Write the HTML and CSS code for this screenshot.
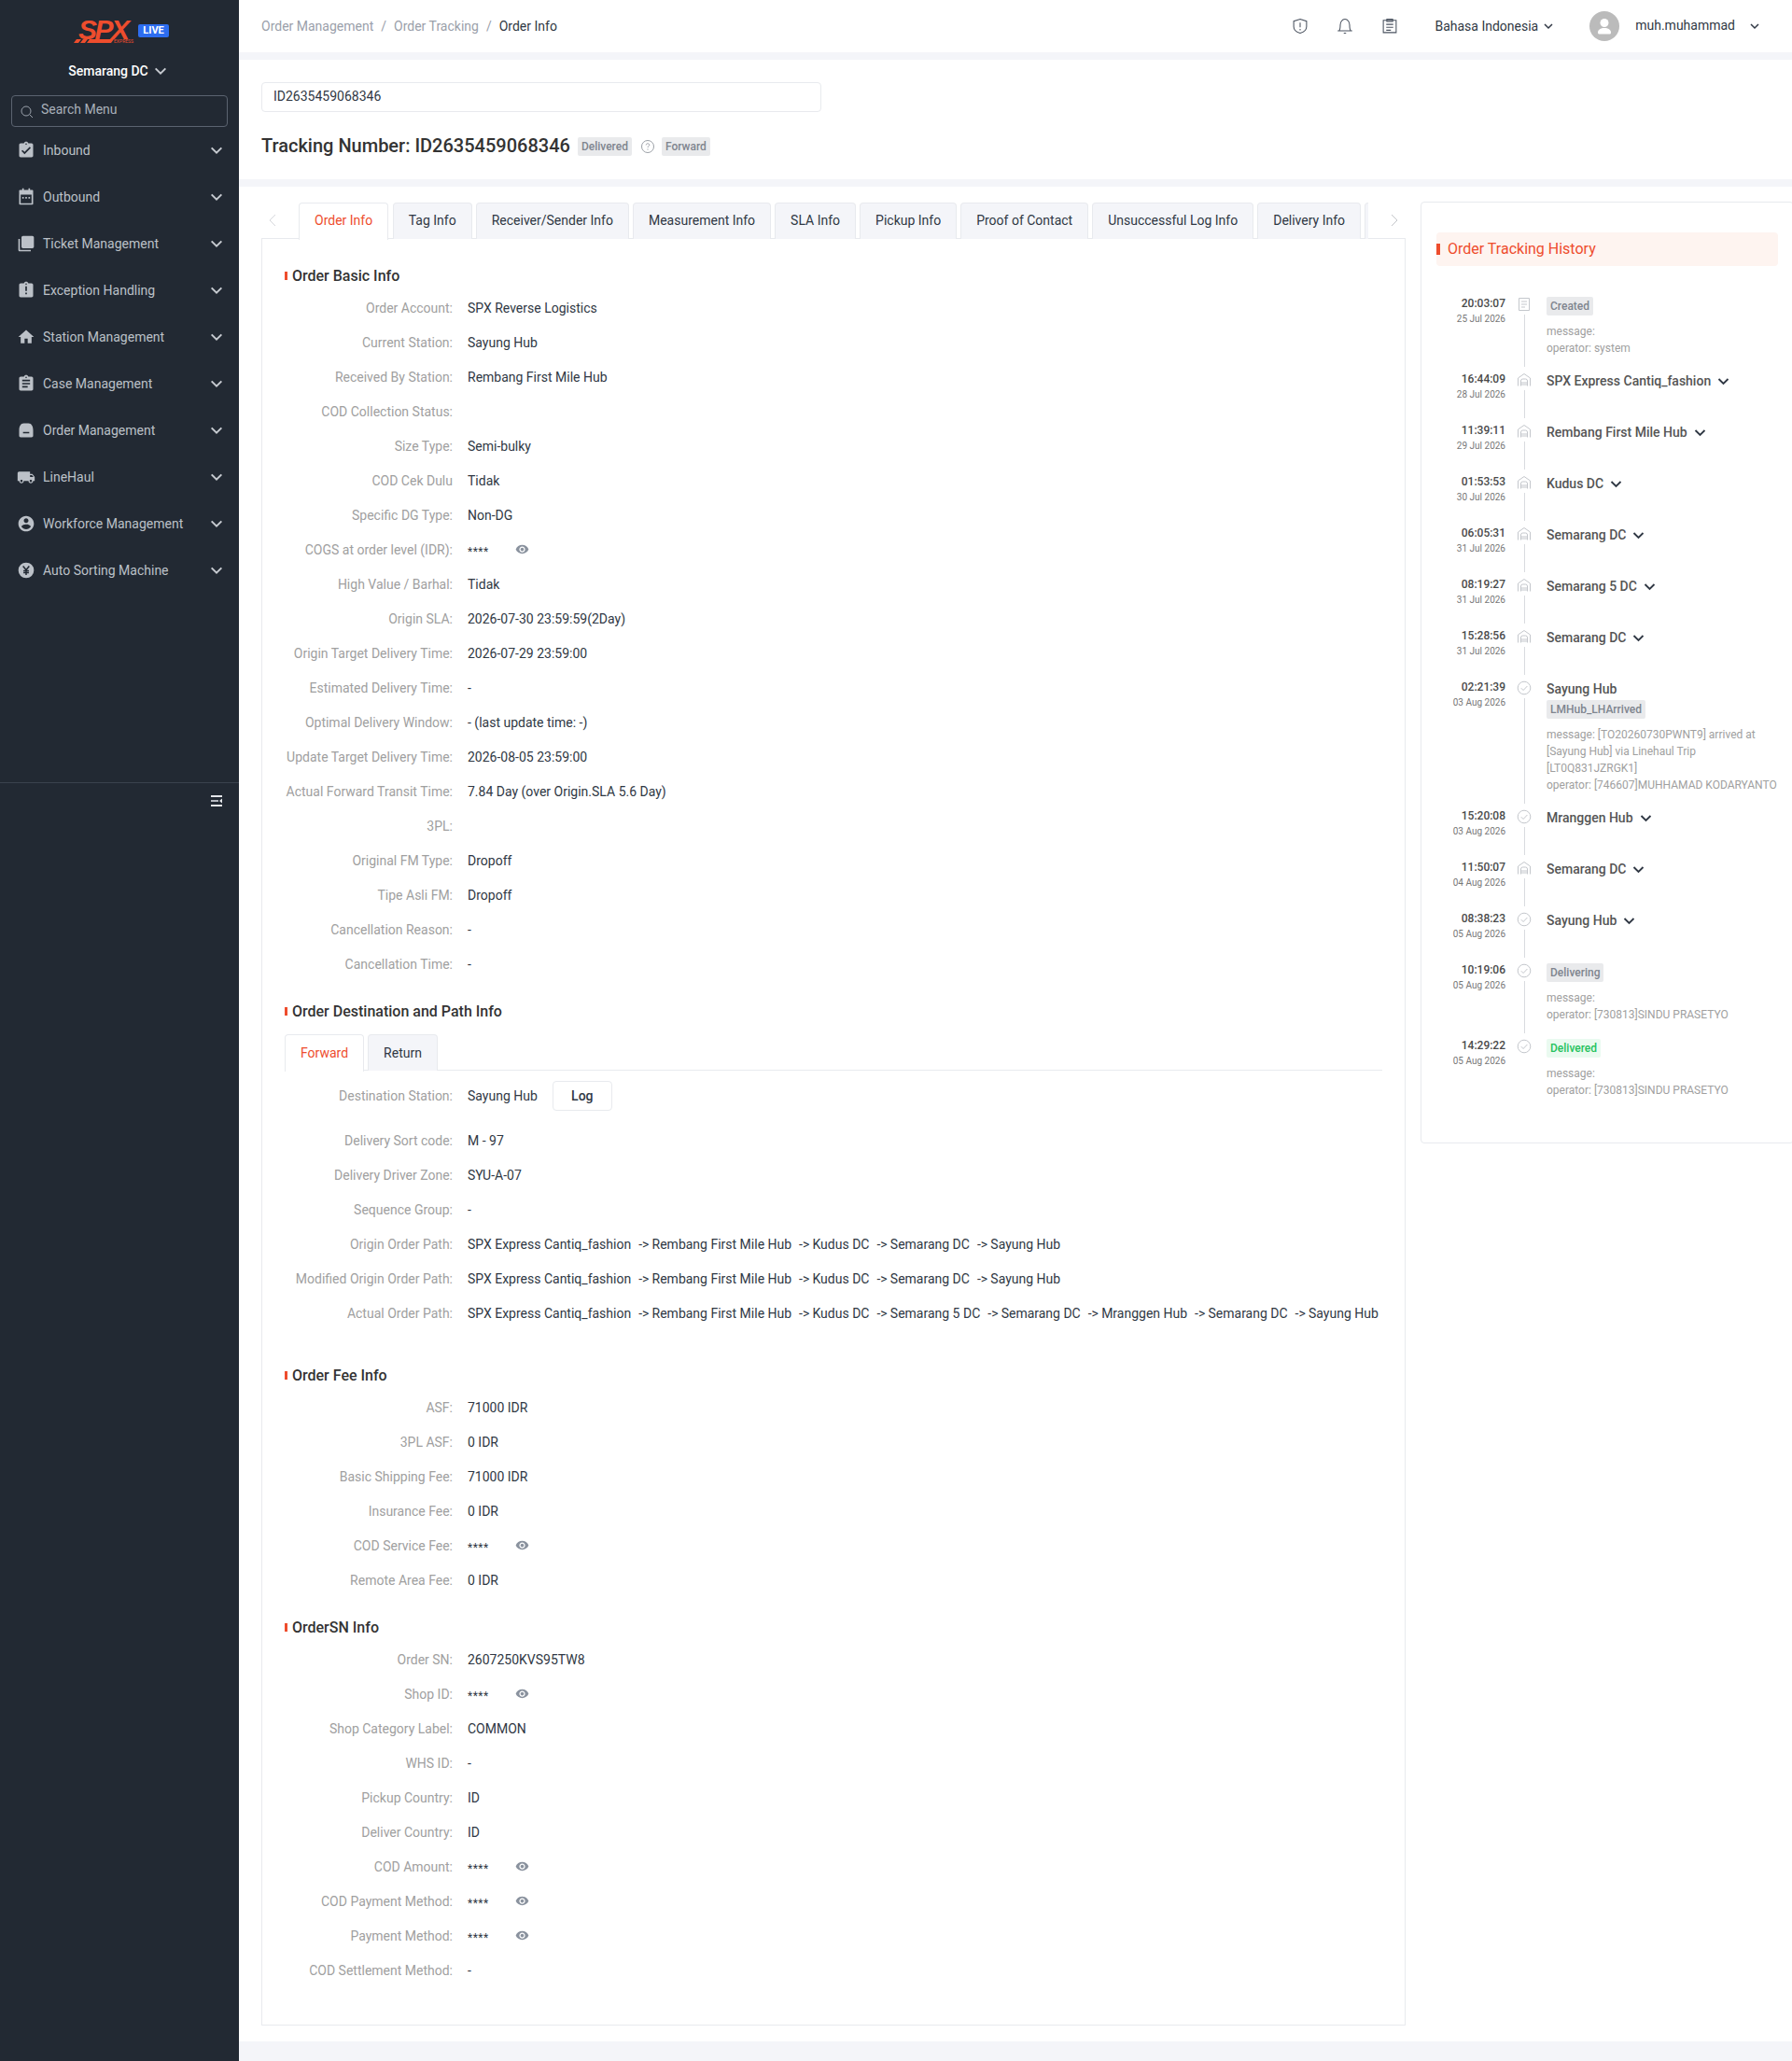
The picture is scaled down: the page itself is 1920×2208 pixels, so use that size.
FILE: index.html
```html
<!DOCTYPE html>
<html lang="en">
<head>
    <meta charset="UTF-8">
    <title>Order Info</title>
    <link rel="stylesheet" href="styles.css">
</head>
<body>

    <!-- shared icons -->
    <svg class="icon-defs" width="0" height="0">
        <symbol id="i-eye" viewBox="0 0 24 24"><path d="M12 4.500C7 4.500 2.730 7.610 1 12c1.730 4.390 6 7.500 11 7.500s9.270-3.110 11-7.500c-1.730-4.390-6-7.500-11-7.500zM12 17c-2.760 0-5-2.240-5-5s2.240-5 5-5 5 2.240 5 5-2.240 5-5 5zm0-8c-1.660 0-3 1.340-3 3s1.340 3 3 3 3-1.340 3-3-1.340-3-3-3z"/></symbol>
        <symbol id="i-down" viewBox="0 0 12 12"><path d="M2 4l4 4 4-4" fill="none" stroke="currentColor" stroke-width="1.500"/></symbol>
        <symbol id="i-doc" viewBox="0 0 16 16"><path d="M2.500 1.500h11v13h-11zM5 5h6M5 8h6M5 11h4" fill="none" stroke="currentColor"/></symbol>
        <symbol id="i-station" viewBox="0 0 16 16"><path d="M1.500 14.500V6L8 1.500 14.500 6v8.500" fill="none" stroke="currentColor"/><path d="M4.500 14.500V9q0-2 2-2h3q2 0 2 2v5.500M4.500 11h7M4.500 13h7" fill="none" stroke="currentColor"/></symbol>
        <symbol id="i-check" viewBox="0 0 16 16"><circle cx="8" cy="8" r="6.800" fill="none" stroke="currentColor"/><path d="M4.800 8.200l2.300 2.300 4.300-4.500" fill="none" stroke="currentColor"/></symbol>
    </svg>

    <div class="layout">

        <aside class="sidebar">
            <div class="brand">
                <svg class="spx-logo" width="66" height="37" viewBox="0 -6 66 37">
                    <text class="spx-word" x="5" y="23">SPX</text>
                    <path d="M3 23h5l-3 4H0zM10 23h5l-3 4H7zM17 23h26l-3 4H14z" fill="#ee4d2d"/>
                    <text class="spx-sub" x="43" y="27">EXPRESS</text>
                </svg>
                <span class="live-badge">LIVE</span>
            </div>
            <div class="station-switch">Semarang DC <svg width="16" height="16"><use href="#i-down"/></svg></div>
            <div class="menu-search">
                <svg width="14" height="14" viewBox="0 0 14 14"><circle cx="6" cy="6" r="5" fill="none" stroke="#9aa1ab"/><path d="M10 10l3 3" stroke="#9aa1ab"/></svg>
                <span>Search Menu</span>
            </div>
            <ul class="menu">
                <li class="menu-item">
                    <svg class="menu-icon" viewBox="0 0 24 24"><path d="M19 3h-4.180C14.400 1.840 13.300 1 12 1c-1.300 0-2.400.84-2.820 2H5c-1.100 0-2 .9-2 2v14c0 1.100.9 2 2 2h14c1.100 0 2-.9 2-2V5c0-1.100-.9-2-2-2zm-7 0c.55 0 1 .45 1 1s-.45 1-1 1-1-.45-1-1 .45-1 1-1zm-2 14l-4-4 1.410-1.410L10 14.170l6.590-6.590L18 9l-8 8z"/></svg>
                    <span>Inbound</span><svg class="menu-arrow"><use href="#i-down"/></svg>
                </li>
                <li class="menu-item">
                    <svg class="menu-icon" viewBox="0 0 24 24"><path fill-rule="evenodd" d="M7 1h2v2h6V1h2v2h3c.6 0 1 .4 1 1v17c0 .6-.4 1-1 1H4c-.6 0-1-.4-1-1V4c0-.6.4-1 1-1h3V1zM5 9v11h14V9H5zm2 3h2v2H7v-2zm4 0h2v2h-2v-2zm4 0h2v2h-2v-2z"/></svg>
                    <span>Outbound</span><svg class="menu-arrow"><use href="#i-down"/></svg>
                </li>
                <li class="menu-item">
                    <svg class="menu-icon" viewBox="0 0 24 24"><path d="M4 6H2v14c0 1.100.9 2 2 2h14v-2H4V6zm16-4H8c-1.100 0-2 .9-2 2v12c0 1.100.9 2 2 2h12c1.100 0 2-.9 2-2V4c0-1.100-.9-2-2-2z"/></svg>
                    <span>Ticket Management</span><svg class="menu-arrow"><use href="#i-down"/></svg>
                </li>
                <li class="menu-item">
                    <svg class="menu-icon" viewBox="0 0 24 24"><path d="M19 3h-4.180C14.400 1.840 13.300 1 12 1c-1.300 0-2.400.84-2.820 2H5c-1.100 0-2 .9-2 2v14c0 1.100.9 2 2 2h14c1.100 0 2-.9 2-2V5c0-1.100-.9-2-2-2zm-7 0c.55 0 1 .45 1 1s-.45 1-1 1-1-.45-1-1 .45-1 1-1zm1 14h-2v-2h2v2zm0-4h-2V7h2v6z"/></svg>
                    <span>Exception Handling</span><svg class="menu-arrow"><use href="#i-down"/></svg>
                </li>
                <li class="menu-item">
                    <svg class="menu-icon" viewBox="0 0 24 24"><path d="M10 20v-6h4v6h5v-8h3L12 3 2 12h3v8z"/></svg>
                    <span>Station Management</span><svg class="menu-arrow"><use href="#i-down"/></svg>
                </li>
                <li class="menu-item">
                    <svg class="menu-icon" viewBox="0 0 24 24"><path d="M19 3h-4.180C14.400 1.840 13.300 1 12 1c-1.300 0-2.400.84-2.820 2H5c-1.100 0-2 .9-2 2v14c0 1.100.9 2 2 2h14c1.100 0 2-.9 2-2V5c0-1.100-.9-2-2-2zm-7 0c.55 0 1 .45 1 1s-.45 1-1 1-1-.45-1-1 .45-1 1-1zm2 14H7v-2h7v2zm3-4H7v-2h10v2zm0-4H7V7h10v2z"/></svg>
                    <span>Case Management</span><svg class="menu-arrow"><use href="#i-down"/></svg>
                </li>
                <li class="menu-item">
                    <svg class="menu-icon" viewBox="0 0 24 24"><path fill-rule="evenodd" d="M3 12C3 7 5 3 9 3h6c4 0 6 4 6 9v7c0 1.100-.9 2-2 2H5c-1.100 0-2-.9-2-2v-7zm5 2v2h8v-2H8z"/></svg>
                    <span>Order Management</span><svg class="menu-arrow"><use href="#i-down"/></svg>
                </li>
                <li class="menu-item">
                    <svg class="menu-icon" viewBox="0 0 24 24"><path d="M20 8h-3V5H3c-1.100 0-2 .9-2 2v10h2c0 1.660 1.340 3 3 3s3-1.340 3-3h6c0 1.660 1.340 3 3 3s3-1.340 3-3h2v-5l-3-4zM6 18.500c-.83 0-1.500-.67-1.500-1.500s.67-1.500 1.500-1.500 1.500.67 1.500 1.500-.67 1.500-1.500 1.500zm13.500-9l1.960 2.500H17V9.500h2.500zm-1.500 9c-.83 0-1.500-.67-1.500-1.500s.67-1.500 1.500-1.500 1.500.67 1.500 1.500-.67 1.500-1.500 1.500z"/></svg>
                    <span>LineHaul</span><svg class="menu-arrow"><use href="#i-down"/></svg>
                </li>
                <li class="menu-item">
                    <svg class="menu-icon" viewBox="0 0 24 24"><path d="M12 2C6.480 2 2 6.480 2 12s4.480 10 10 10 10-4.480 10-10S17.520 2 12 2zm0 3c1.660 0 3 1.340 3 3s-1.340 3-3 3-3-1.340-3-3 1.340-3 3-3zm0 14.200c-2.500 0-4.710-1.280-6-3.220.03-1.990 4-3.080 6-3.080 1.990 0 5.970 1.090 6 3.080-1.290 1.940-3.500 3.220-6 3.220z"/></svg>
                    <span>Workforce Management</span><svg class="menu-arrow"><use href="#i-down"/></svg>
                </li>
                <li class="menu-item">
                    <svg class="menu-icon" viewBox="0 0 24 24"><circle cx="12" cy="12" r="10"/><path d="M8 6.500l4 5 4-5M12 11.500V18M8.500 12.500h7M8.500 15h7" fill="none" stroke="#222933" stroke-width="1.800"/></svg>
                    <span>Auto Sorting Machine</span><svg class="menu-arrow"><use href="#i-down"/></svg>
                </li>
            </ul>
            <div class="collapse-bar">
                <svg width="12" height="12" viewBox="0 0 12 12"><path d="M0 0h12v2H0zM0 10h12v2H0z" fill="#e4e6ea"/><path d="M0 5h8v2H0z" fill="#b4b8bf"/><path d="M12 3.500v5L9 6z" fill="#e4e6ea"/></svg>
            </div>
        </aside>

        <div class="page">

            <header class="topbar">
                <nav class="crumbs">
                    <span>Order Management</span><i>/</i><span>Order Tracking</span><i>/</i><b>Order Info</b>
                </nav>
                <div class="top-tools">
                    <svg class="tool" viewBox="0 0 16 16"><path d="M8 2l5.500 1.800v4.500c0 2.800-2.500 4.700-5.500 5.700-3-1-5.500-2.900-5.500-5.700V3.800zM8 5v4M8 10.300v1.200" fill="none" stroke="#4b5360" stroke-width=".85"/></svg>
                    <svg class="tool" viewBox="0 0 16 16"><path d="M3 12c1-1.200 1-2.500 1-5 0-2.500 1.600-5 4-5s4 2.500 4 5c0 2.500 0 3.800 1 5zM1.800 12h12.400M7 14h2" fill="none" stroke="#4b5360" stroke-width=".85"/></svg>
                    <svg class="tool" viewBox="0 0 16 16"><path d="M2.500 3h11v10.500h-11zM5.500 2h5v2h-5zM5 6.500h6M5 9h6M5 11.500h4" fill="none" stroke="#4b5360" stroke-width=".85"/></svg>
                    <span class="lang">Bahasa Indonesia <svg width="12" height="12"><use href="#i-down"/></svg></span>
                    <span class="avatar">
                        <svg width="32" height="32" viewBox="0 0 32 32"><circle cx="16" cy="16" r="16" fill="#bbb"/><circle cx="16" cy="12.500" r="4.500" fill="#fff"/><path d="M9 23c0-3.500 3-5 7-5s7 1.500 7 5c0 .8-.5 1.500-1.500 1.500h-11C9.500 24.500 9 23.800 9 23z" fill="#fff"/></svg>
                    </span>
                    <span class="user">muh.muhammad</span>
                    <svg class="user-arrow" width="12" height="12"><use href="#i-down"/></svg>
                </div>
            </header>

            <section class="search-head">
                <div class="track-input">ID2635459068346</div>
                <div class="track-title">
                    <h1>Tracking Number: ID2635459068346</h1>
                    <span class="tag">Delivered</span>
                    <svg class="help" width="16" height="16" viewBox="0 0 16 16"><circle cx="8" cy="8" r="6.500" fill="none" stroke="#9b9fa6"/><path d="M6.200 6.400c0-1 .8-1.600 1.800-1.600s1.800.6 1.800 1.500c0 1.300-1.800 1.300-1.800 2.700M8 10.400v1.200" fill="none" stroke="#9b9fa6"/></svg>
                    <span class="tag">Forward</span>
                </div>
            </section>

            <div class="content">

                <main class="detail">
                    <div class="tabs-bar">
                        <svg class="tab-arrow" width="8" height="14" viewBox="0 0 8 14"><path d="M7 1L1 7l6 6" fill="none" stroke="#d6d8dc"/></svg>
                        <div class="tabs">
                            <span class="tab active">Order Info</span>
                            <span class="tab">Tag Info</span>
                            <span class="tab">Receiver/Sender Info</span>
                            <span class="tab">Measurement Info</span>
                            <span class="tab">SLA Info</span>
                            <span class="tab">Pickup Info</span>
                            <span class="tab">Proof of Contact</span>
                            <span class="tab">Unsuccessful Log Info</span>
                            <span class="tab">Delivery Info</span>
                            <span class="tab tab-clipped"></span>
                        </div>
                        <svg class="tab-arrow" width="8" height="14" viewBox="0 0 8 14"><path d="M1 1l6 6-6 6" fill="none" stroke="#c4c6ca"/></svg>
                    </div>

                    <div class="card">
                        <h3 class="sec-title">Order Basic Info</h3>
                        <div class="row"><label>Order Account:</label><div>SPX Reverse Logistics</div></div>
                        <div class="row"><label>Current Station:</label><div>Sayung Hub</div></div>
                        <div class="row"><label>Received By Station:</label><div>Rembang First Mile Hub</div></div>
                        <div class="row"><label>COD Collection Status:</label><div></div></div>
                        <div class="row"><label>Size Type:</label><div>Semi-bulky</div></div>
                        <div class="row"><label>COD Cek Dulu</label><div>Tidak</div></div>
                        <div class="row"><label>Specific DG Type:</label><div>Non-DG</div></div>
                        <div class="row"><label>COGS at order level (IDR):</label><div class="masked"><span>****</span><svg><use href="#i-eye"/></svg></div></div>
                        <div class="row"><label>High Value / Barhal:</label><div>Tidak</div></div>
                        <div class="row"><label>Origin SLA:</label><div>2026-07-30 23:59:59(2Day)</div></div>
                        <div class="row"><label>Origin Target Delivery Time:</label><div>2026-07-29 23:59:00</div></div>
                        <div class="row"><label>Estimated Delivery Time:</label><div>-</div></div>
                        <div class="row"><label>Optimal Delivery Window:</label><div>- (last update time: -)</div></div>
                        <div class="row"><label>Update Target Delivery Time:</label><div>2026-08-05 23:59:00</div></div>
                        <div class="row"><label>Actual Forward Transit Time:</label><div>7.84 Day (over Origin.SLA 5.6 Day)</div></div>
                        <div class="row"><label>3PL:</label><div></div></div>
                        <div class="row"><label>Original FM Type:</label><div>Dropoff</div></div>
                        <div class="row"><label>Tipe Asli FM:</label><div>Dropoff</div></div>
                        <div class="row"><label>Cancellation Reason:</label><div>-</div></div>
                        <div class="row"><label>Cancellation Time:</label><div>-</div></div>

                        <h3 class="sec-title sec-next">Order Destination and Path Info</h3>
                        <div class="sub-tabs">
                            <span class="tab active">Forward</span>
                            <span class="tab">Return</span>
                        </div>
                        <div class="row row-log"><label>Destination Station:</label><div class="with-log">Sayung Hub <button type="button">Log</button></div></div>
                        <div class="row"><label>Delivery Sort code:</label><div>M - 97</div></div>
                        <div class="row"><label>Delivery Driver Zone:</label><div>SYU-A-07</div></div>
                        <div class="row"><label>Sequence Group:</label><div>-</div></div>
                        <div class="row"><label>Origin Order Path:</label><div class="path">SPX Express Cantiq_fashion<i>-&gt;</i>Rembang First Mile Hub<i>-&gt;</i>Kudus DC<i>-&gt;</i>Semarang DC<i>-&gt;</i>Sayung Hub</div></div>
                        <div class="row"><label>Modified Origin Order Path:</label><div class="path">SPX Express Cantiq_fashion<i>-&gt;</i>Rembang First Mile Hub<i>-&gt;</i>Kudus DC<i>-&gt;</i>Semarang DC<i>-&gt;</i>Sayung Hub</div></div>
                        <div class="row"><label>Actual Order Path:</label><div class="path">SPX Express Cantiq_fashion<i>-&gt;</i>Rembang First Mile Hub<i>-&gt;</i>Kudus DC<i>-&gt;</i>Semarang 5 DC<i>-&gt;</i>Semarang DC<i>-&gt;</i>Mranggen Hub<i>-&gt;</i>Semarang DC<i>-&gt;</i>Sayung Hub</div></div>

                        <h3 class="sec-title sec-fee">Order Fee Info</h3>
                        <div class="row"><label>ASF:</label><div>71000 IDR</div></div>
                        <div class="row"><label>3PL ASF:</label><div>0 IDR</div></div>
                        <div class="row"><label>Basic Shipping Fee:</label><div>71000 IDR</div></div>
                        <div class="row"><label>Insurance Fee:</label><div>0 IDR</div></div>
                        <div class="row"><label>COD Service Fee:</label><div class="masked"><span>****</span><svg><use href="#i-eye"/></svg></div></div>
                        <div class="row"><label>Remote Area Fee:</label><div>0 IDR</div></div>

                        <h3 class="sec-title sec-next">OrderSN Info</h3>
                        <div class="row"><label>Order SN:</label><div>2607250KVS95TW8</div></div>
                        <div class="row"><label>Shop ID:</label><div class="masked"><span>****</span><svg><use href="#i-eye"/></svg></div></div>
                        <div class="row"><label>Shop Category Label:</label><div>COMMON</div></div>
                        <div class="row"><label>WHS ID:</label><div>-</div></div>
                        <div class="row"><label>Pickup Country:</label><div>ID</div></div>
                        <div class="row"><label>Deliver Country:</label><div>ID</div></div>
                        <div class="row"><label>COD Amount:</label><div class="masked"><span>****</span><svg><use href="#i-eye"/></svg></div></div>
                        <div class="row"><label>COD Payment Method:</label><div class="masked"><span>****</span><svg><use href="#i-eye"/></svg></div></div>
                        <div class="row"><label>Payment Method:</label><div class="masked"><span>****</span><svg><use href="#i-eye"/></svg></div></div>
                        <div class="row"><label>COD Settlement Method:</label><div>-</div></div>
                    </div>
                </main>

                <aside class="history">
                    <div class="history-title">Order Tracking History</div>
                    <div class="timeline">

                        <div class="step">
                            <div class="step-time"><b>20:03:07</b><span>25 Jul 2026</span></div>
                            <div class="step-node"><svg><use href="#i-doc"/></svg></div>
                            <div class="step-body">
                                <span class="tag tag-top">Created</span>
                                <p class="note">message:<br>operator: system</p>
                            </div>
                        </div>

                        <div class="step">
                            <div class="step-time"><b>16:44:09</b><span>28 Jul 2026</span></div>
                            <div class="step-node"><svg><use href="#i-station"/></svg></div>
                            <div class="step-body"><div class="step-name">SPX Express Cantiq_fashion <svg><use href="#i-down"/></svg></div></div>
                        </div>

                        <div class="step">
                            <div class="step-time"><b>11:39:11</b><span>29 Jul 2026</span></div>
                            <div class="step-node"><svg><use href="#i-station"/></svg></div>
                            <div class="step-body"><div class="step-name">Rembang First Mile Hub <svg><use href="#i-down"/></svg></div></div>
                        </div>

                        <div class="step">
                            <div class="step-time"><b>01:53:53</b><span>30 Jul 2026</span></div>
                            <div class="step-node"><svg><use href="#i-station"/></svg></div>
                            <div class="step-body"><div class="step-name">Kudus DC <svg><use href="#i-down"/></svg></div></div>
                        </div>

                        <div class="step">
                            <div class="step-time"><b>06:05:31</b><span>31 Jul 2026</span></div>
                            <div class="step-node"><svg><use href="#i-station"/></svg></div>
                            <div class="step-body"><div class="step-name">Semarang DC <svg><use href="#i-down"/></svg></div></div>
                        </div>

                        <div class="step">
                            <div class="step-time"><b>08:19:27</b><span>31 Jul 2026</span></div>
                            <div class="step-node"><svg><use href="#i-station"/></svg></div>
                            <div class="step-body"><div class="step-name">Semarang 5 DC <svg><use href="#i-down"/></svg></div></div>
                        </div>

                        <div class="step">
                            <div class="step-time"><b>15:28:56</b><span>31 Jul 2026</span></div>
                            <div class="step-node"><svg><use href="#i-station"/></svg></div>
                            <div class="step-body"><div class="step-name">Semarang DC <svg><use href="#i-down"/></svg></div></div>
                        </div>

                        <div class="step">
                            <div class="step-time"><b>02:21:39</b><span>03 Aug 2026</span></div>
                            <div class="step-node"><svg><use href="#i-check"/></svg></div>
                            <div class="step-body">
                                <div class="step-name">Sayung Hub</div>
                                <span class="tag">LMHub_LHArrived</span>
                                <p class="note">message: [TO20260730PWNT9] arrived at<br>[Sayung Hub] via Linehaul Trip<br>[LT0Q831JZRGK1]<br>operator: [746607]MUHHAMAD KODARYANTO</p>
                            </div>
                        </div>

                        <div class="step">
                            <div class="step-time"><b>15:20:08</b><span>03 Aug 2026</span></div>
                            <div class="step-node"><svg><use href="#i-check"/></svg></div>
                            <div class="step-body"><div class="step-name">Mranggen Hub <svg><use href="#i-down"/></svg></div></div>
                        </div>

                        <div class="step">
                            <div class="step-time"><b>11:50:07</b><span>04 Aug 2026</span></div>
                            <div class="step-node"><svg><use href="#i-station"/></svg></div>
                            <div class="step-body"><div class="step-name">Semarang DC <svg><use href="#i-down"/></svg></div></div>
                        </div>

                        <div class="step">
                            <div class="step-time"><b>08:38:23</b><span>05 Aug 2026</span></div>
                            <div class="step-node"><svg><use href="#i-check"/></svg></div>
                            <div class="step-body"><div class="step-name">Sayung Hub <svg><use href="#i-down"/></svg></div></div>
                        </div>

                        <div class="step">
                            <div class="step-time"><b>10:19:06</b><span>05 Aug 2026</span></div>
                            <div class="step-node"><svg><use href="#i-check"/></svg></div>
                            <div class="step-body">
                                <span class="tag tag-top">Delivering</span>
                                <p class="note">message:<br>operator: [730813]SINDU PRASETYO</p>
                            </div>
                        </div>

                        <div class="step step-last">
                            <div class="step-time"><b>14:29:22</b><span>05 Aug 2026</span></div>
                            <div class="step-node"><svg><use href="#i-check"/></svg></div>
                            <div class="step-body">
                                <span class="tag tag-top tag-green">Delivered</span>
                                <p class="note">message:<br>operator: [730813]SINDU PRASETYO</p>
                            </div>
                        </div>

                    </div>
                </aside>

            </div>
        </div>
    </div>

</body>
</html>
```

FILE: styles.css
```css
* {
    box-sizing: border-box;
}

html, body {
    margin: 0;
    padding: 0;
    height: 100%;
}

body {
    font-family: Roboto, 'Liberation Sans', sans-serif;
    font-size: 14px;
    color: #303844;
    background-color: #f4f5f9;
    overflow: hidden;
}

.icon-defs {
    position: absolute;
}

.layout {
    display: flex;
    width: 1920px;
    height: 2208px;
}

/* sidebar */
.sidebar {
    width: 256px;
    flex-shrink: 0;
    background-color: #222933;
    color: #bcc1c8;
}

.brand {
    height: 56px;
    padding: 13px 0 0 79px;
    display: flex;
    align-items: flex-start;
}

.spx-logo {
    margin-right: 3px;
}

.spx-word {
    font-family: 'Liberation Sans', sans-serif;
    font-size: 30px;
    font-weight: bold;
    font-style: italic;
    fill: #ee4d2d;
    letter-spacing: -2.500px;
}

.spx-sub {
    font-size: 5px;
    fill: #ee4d2d;
}

.live-badge {
    margin-top: 13px;
    width: 33px;
    height: 14px;
    background-color: #2d6df0;
    border-radius: 2px;
    color: #fff;
    font-size: 11px;
    font-weight: 700;
    line-height: 14px;
    text-align: center;
}

.station-switch {
    height: 40px;
    display: flex;
    align-items: center;
    justify-content: center;
    gap: 5px;
    color: #fff;
    font-weight: 500;
    padding-right: 3px;
}

.station-switch svg {
    color: #c6cad0;
}

.menu-search {
    margin: 6px 12px 0;
    height: 34px;
    border: 1px solid #5b6370;
    border-radius: 4px;
    display: flex;
    align-items: center;
    padding: 0 9px;
    gap: 8px;
    color: #a9b0ba;
}

.menu-search span {
    margin-top: -4px;
}

.menu-search svg {
    margin-top: 2px;
}

.menu {
    list-style: none;
    margin: 0;
    padding: 0;
    border-bottom: 1px solid #3a424e;
    height: 703px;
}

.menu-item {
    height: 50px;
    display: flex;
    align-items: center;
    padding-left: 18px;
}

.menu-item span {
    margin-left: 8px;
    flex: 1;
}

.menu-icon {
    width: 20px;
    height: 20px;
    fill: #bcc1c8;
}

.menu-arrow {
    width: 16px;
    height: 16px;
    margin-right: 16px;
    color: #c6cad0;
}

.collapse-bar {
    display: flex;
    justify-content: flex-end;
    padding: 13px 18px 0 0;
}

/* page */
.page {
    flex: 1;
    min-width: 0;
    overflow: hidden;
}

.topbar {
    height: 56px;
    background-color: #fff;
    display: flex;
    align-items: center;
    justify-content: space-between;
    padding: 0 24px;
}

.crumbs {
    color: #9aa0aa;
    display: flex;
}

.crumbs i {
    font-style: normal;
    margin: 0 8px;
}

.crumbs b {
    font-weight: 400;
    color: #303844;
}

.top-tools {
    display: flex;
    align-items: center;
}

.tool {
    width: 20px;
    height: 20px;
    margin-right: 28px;
}

.lang {
    display: flex;
    align-items: center;
    gap: 5px;
    margin-left: 10px;
}

.avatar {
    margin-left: 38px;
    height: 32px;
}

.user {
    margin-left: 17px;
    margin-top: -2px;
}

.user-arrow {
    margin-left: 15px;
    margin-right: 10px;
}

.search-head {
    margin-top: 8px;
    height: 128px;
    background-color: #fff;
    padding: 24px 24px 0;
}

.track-input {
    width: 600px;
    height: 32px;
    border: 1px solid #e8eaee;
    border-radius: 4px;
    padding: 0 12px;
    line-height: 29px;
}

.track-title {
    margin-top: 20px;
    display: flex;
    align-items: center;
    height: 32px;
}

.track-title h1 {
    margin: 0 8px 0 0;
    font-size: 20px;
    font-weight: 500;
    color: #333;
}

.track-title .tag {
    margin-top: 2px;
}

.tag {
    display: inline-block;
    height: 20px;
    padding: 0 4px;
    background-color: #e9eaec;
    border-radius: 2px;
    color: #7f858f;
    font-size: 12px;
    font-weight: 500;
    line-height: 20px;
}

.help {
    margin: 1px 7px 0 9px;
}

.content {
    margin-top: 8px;
    height: 1987px;
    background-color: #fff;
    padding: 16px 0 0 24px;
    display: flex;
    align-items: flex-start;
    gap: 16px;
}

/* left block */
.detail {
    width: 1226px;
    flex-shrink: 0;
}

.tabs-bar {
    display: flex;
    align-items: center;
    height: 39px;
}

.tabs-bar .tab-arrow {
    flex-shrink: 0;
    margin: 0 0 0 24px;
}

.tabs-bar .tab-arrow:first-child {
    margin: 0 24px 0 8px;
}

.tabs {
    display: flex;
    gap: 4px;
    width: 1146px;
    overflow: hidden;
    margin-top: 1px;
    position: relative;
    z-index: 1;
    margin-bottom: -1px;
}

.tab {
    flex-shrink: 0;
    height: 39px;
    padding: 0 16px;
    line-height: 37px;
    background-color: #f4f5f9;
    border: 1px solid #e8eaee;
    border-bottom: none;
    border-radius: 4px 4px 0 0;
}

.tab.active {
    background-color: #fff;
    color: #ee4d2d;
    height: 40px;
}

.tabs .tab.active {
    margin-right: .6px;
}

.tab-clipped {
    width: 80px;
}

.card {
    border: 1px solid #e8eaee;
    padding: 23px 0 39px 24px;
    height: 1915px;
}

.sec-title {
    margin: 0;
    height: 32px;
    font-size: 16px;
    font-weight: 500;
    color: #333;
    line-height: 33px;
    padding-left: 8px;
    position: relative;
}

.sec-title::before {
    content: "";
    position: absolute;
    left: 0;
    top: 12px;
    width: 3px;
    height: 9px;
    background-color: #ee4d2d;
}

.sec-next {
    margin-top: 16px;
}

.sec-fee {
    margin-top: 32px;
}

.row {
    display: grid;
    grid-template-columns: 180px 1fr;
    column-gap: 16px;
    height: 37px;
    align-items: center;
}

.row label {
    color: #a0a0a0;
    text-align: right;
    white-space: nowrap;
}

.masked {
    display: flex;
    align-items: center;
}

.masked span {
    width: 51px;
    font-size: 12px;
    line-height: 14px;
    padding-top: 5px;
    letter-spacing: .5px;
}

.masked svg {
    width: 15px;
    height: 15px;
    fill: #8a929e;
}

.sub-tabs {
    margin: 9px 24px 0 0;
    display: flex;
    gap: 4px;
    height: 39px;
    border-bottom: 1px solid #e8eaee;
}

.sub-tabs .tab {
    line-height: 38px;
}

.row-log {
    height: 32px;
    margin: 11px 0 13px;
}

.with-log {
    display: flex;
    align-items: center;
}

.with-log button {
    margin-left: 16px;
    width: 64px;
    height: 32px;
    background-color: #fff;
    border: 1px solid #e8eaee;
    border-radius: 4px;
    font-family: inherit;
    font-size: 14px;
    font-weight: 500;
    color: #303844;
}

.path {
    white-space: nowrap;
}

.path i {
    font-style: normal;
    margin: 0 3.200px 0 8px;
}

/* right block */
.history {
    width: 400px;
    flex-shrink: 0;
    height: 1009px;
    border: 1px solid #e8eaee;
    border-radius: 4px;
    padding: 32px 16px 0;
}

.history-title {
    height: 36px;
    background-color: #fef4f0;
    border-radius: 4px;
    color: #ee4d2d;
    font-size: 16px;
    line-height: 36px;
    padding-left: 12px;
    position: relative;
}

.history-title::before {
    content: "";
    position: absolute;
    left: 0;
    top: 12px;
    width: 4px;
    height: 12px;
    background-color: #ee4d2d;
}

.timeline {
    margin-top: 30px;
}

.step {
    display: flex;
    min-height: 55px;
    padding-bottom: 14px;
    position: relative;
}

.step-time {
    width: 74px;
    text-align: right;
    flex-shrink: 0;
    padding-top: 1px;
}

.step-time b {
    display: block;
    font-size: 12px;
    line-height: 18px;
    font-weight: 500;
    color: #4a4a4a;
}

.step-time span {
    display: block;
    font-size: 10px;
    line-height: 16px;
    color: #777;
}

.step-node {
    width: 40px;
    margin-right: 4px;
    flex-shrink: 0;
    display: flex;
    justify-content: center;
    position: relative;
    color: #c4c7cc;
}

.step-node svg {
    width: 16px;
    height: 16px;
    margin-top: 3px;
}

.step-node::after {
    content: "";
    position: absolute;
    left: 19.500px;
    top: 22px;
    bottom: -11px;
    width: 1px;
    background-color: #d9dbdf;
}

.step-last .step-node::after {
    display: none;
}

.step-body {
    flex: 1;
    min-width: 0;
}

.step-name {
    font-size: 14px;
    line-height: 24px;
    font-weight: 500;
    color: #555;
    display: flex;
    align-items: center;
    gap: 6px;
}

.step-name svg {
    width: 15px;
    height: 15px;
    color: #303844;
}

.step-body .tag {
    display: block;
    width: fit-content;
}

.tag-top {
    margin-top: 3px;
}

.tag-green {
    background-color: #eafaf0;
    color: #26c25e;
}

.note {
    margin: 8px 0 0;
    font-size: 12px;
    line-height: 18px;
    color: #a0a0a0;
    white-space: nowrap;
}
```
